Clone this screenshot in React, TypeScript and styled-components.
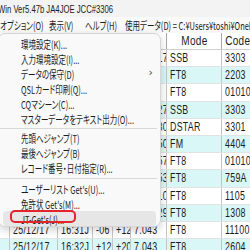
import React from 'react';
import styled, { createGlobalStyle } from 'styled-components';

const GlobalStyle = createGlobalStyle`
  html, body {
    margin: 0;
    padding: 0;
    background: #ffffff;
  }
  body {
    overflow: hidden;
  }
`;

const COLS = '10px 48px 35px 20px 18px 36px 55px 32px 1fr';

const Window = styled.div`
  position: relative;
  width: 250px;
  height: 250px;
  overflow: hidden;
  display: flex;
  flex-direction: column;
  background: #ffffff;
  color: #1b1b1b;
`;

// the capture is squeezed horizontally, so text is drawn condensed
const Squeeze = styled.span<{ $scale?: number; $origin?: string }>`
  display: inline-block;
  white-space: nowrap;
  line-height: 12px;
  transform: scaleX(${(p) => p.$scale ?? 0.68});
  transform-origin: ${(p) => p.$origin ?? 'left'} center;
`;

const TitleBar = styled.div`
  flex: none;
  height: 17px;
  display: flex;
  align-items: center;
  background: #f3f3f3;
  font: 11px 'Liberation Sans', 'Noto Sans CJK JP', sans-serif;
  margin-left: -2px;
`;

const MenuBar = styled.div`
  flex: none;
  height: 16px;
  display: flex;
  align-items: center;
  background: #f9f9f9;
  font: 11px 'Noto Sans CJK JP', sans-serif;
  font-feature-settings: 'palt';
`;

const MenuBarItem = styled.div<{ $w?: number }>`
  flex: ${(p) => (p.$w ? `0 0 ${p.$w}px` : '1 1 auto')};
  overflow: hidden;
  white-space: nowrap;
`;

const Table = styled.div`
  flex: 1;
  display: flex;
  flex-direction: column;
  font: 13px 'Liberation Sans', sans-serif;
  letter-spacing: 0.4px;
`;

const HeaderRow = styled.div`
  flex: none;
  height: 17px;
  display: grid;
  grid-template-columns: ${COLS};
  border-bottom: 1px solid #d0d0d0;
  box-sizing: border-box;
  background: #ffffff;
  font: 12.5px 'Liberation Sans', sans-serif;
`;

const HeaderCell = styled.div`
  border-right: 1px solid #a8a8a8;
  display: flex;
  align-items: center;
  justify-content: center;
  overflow: hidden;
`;

const Row = styled.div<{ $alt: boolean }>`
  flex: none;
  height: 17.2px;
  display: grid;
  grid-template-columns: ${COLS};
  background: ${(p) => (p.$alt ? '#d9f7f7' : '#ffffff')};
  border-bottom: 1px solid #e2e2e2;
  box-sizing: border-box;
`;

const Cell = styled.div`
  border-right: 1px solid #c4c4c4;
  display: flex;
  align-items: center;
  padding-left: 3px;
  overflow: hidden;
`;

const Popup = styled.div`
  position: absolute;
  left: -2px;
  top: 33px;
  width: 163px;
  box-sizing: border-box;
  padding: 2px 0 0;
  background: #f9f9f9;
  border: 1px solid #d6d6d6;
  border-radius: 7px;
  box-shadow: 0 3px 8px rgba(0, 0, 0, 0.18);
  font: 11px 'Noto Sans CJK JP', sans-serif;
  font-feature-settings: 'palt';
  color: #1b1b1b;
`;

const Item = styled.div<{ $hot?: boolean }>`
  position: relative;
  height: 15px;
  margin: 0 4px;
  padding-left: 18px;
  display: flex;
  align-items: center;
  border-radius: 4px;
  background: ${(p) => (p.$hot ? '#e6e6e6' : 'transparent')};
`;

const Arrow = styled.span`
  position: absolute;
  right: 3px;
  top: 0;
  font: 11px 'DejaVu Sans', sans-serif;
  line-height: 14px;
  color: #444;
`;

const Separator = styled.div<{ $gap: number }>`
  height: 1px;
  margin: ${(p) => p.$gap}px 3px ${(p) => p.$gap}px 1px;
  background: #d8d8d8;
`;

const Annotation = styled.div`
  position: absolute;
  left: 7px;
  top: -1px;
  width: 66px;
  height: 13px;
  border: 2px solid #e2252d;
  border-radius: 5px;
  box-sizing: border-box;
  pointer-events: none;
`;

interface LogRow {
  date: string;
  time: string;
  his: string;
  my: string;
  freq: string;
  mode: string;
  code: string;
}

const rows: LogRow[] = [
  { date: '25/12/14', time: '09:12J', his: '59', my: '59', freq: '144.217', mode: 'SSB', code: '3303' },
  { date: '25/12/14', time: '10:40J', his: '-10', my: '-14', freq: '7.074', mode: 'FT8', code: '2203' },
  { date: '25/12/15', time: '11:02J', his: '-08', my: '-12', freq: '7.074', mode: 'FT8', code: '01010' },
  { date: '25/12/15', time: '13:21J', his: '59', my: '59', freq: '144.227', mode: 'SSB', code: '3303' },
  { date: '25/12/15', time: '14:05J', his: '59', my: '59', freq: '434.330', mode: 'DSTAR', code: '3301' },
  { date: '25/12/16', time: '08:44J', his: '59', my: '59', freq: '145.550', mode: 'FM', code: '4404' },
  { date: '25/12/16', time: '12:18J', his: '-02', my: '-09', freq: '1.84057', mode: 'FT8', code: '01010' },
  { date: '25/12/16', time: '18:30J', his: '-11', my: '-05', freq: '18.1053', mode: 'FT8', code: '759A' },
  { date: '25/12/17', time: '07:55J', his: '+03', my: '-07', freq: '21.0710', mode: 'FT8', code: '1105' },
  { date: '25/12/17', time: '16:20J', his: '-04', my: '+02', freq: '50.3129', mode: 'FT8', code: '1308' },
  { date: '25/12/17', time: '16:31J', his: '-06', my: '+12', freq: '7.043', mode: 'FT8', code: '11100' },
  { date: '25/12/17', time: '16:32J', his: '+12', my: '+20', freq: '7.043', mode: 'FT8', code: '2604' },
];

const menuGroups: { label: string; sub?: boolean }[][] = [
  [
    { label: '環境設定(K)...' },
    { label: '入力環境設定(I)...' },
    { label: 'データの保守(D)', sub: true },
    { label: 'QSLカード印刷(Q)...' },
    { label: 'CQマシーン(C)...' },
    { label: 'マスターデータをテキスト出力(O)...' },
  ],
  [{ label: '先頭へジャンプ(T)' }, { label: '最後へジャンプ(B)' }, { label: 'レコード番号・日付指定(R)...' }],
  [{ label: 'ユーザーリスト Get\'s(U)...' }, { label: '免許状 Get\'s(M)...' }, { label: 'JT-Get\'s(J)...' }],
];

function OptionMenu(): JSX.Element {
  return (
    <Popup>
      {menuGroups.map((group, gi) => (
        <React.Fragment key={gi}>
          {gi > 0 && <Separator $gap={gi === 1 ? 1.5 : 2.5} />}
          {group.map((item) => {
            const hot = item.label.startsWith('JT-');
            return (
              <Item key={item.label} $hot={hot}>
                <Squeeze>{item.label}</Squeeze>
                {item.sub && <Arrow>›</Arrow>}
                {hot && <Annotation />}
              </Item>
            );
          })}
        </React.Fragment>
      ))}
    </Popup>
  );
}

export default function App(): JSX.Element {
  return (
    <>
      <GlobalStyle />
      <Window>
        <TitleBar>
          <Squeeze $scale={0.7}>Win Ver5.47b JA4JOE JCC#3306</Squeeze>
        </TitleBar>
        <MenuBar>
          <MenuBarItem $w={49}>
            <Squeeze>オプション(O)</Squeeze>
          </MenuBarItem>
          <MenuBarItem $w={36}>
            <Squeeze>表示(V)</Squeeze>
          </MenuBarItem>
          <MenuBarItem $w={40}>
            <Squeeze>ヘルプ(H)</Squeeze>
          </MenuBarItem>
          <MenuBarItem>
            <Squeeze>使用データ(D) = C:¥Users¥toshi¥OneDrive¥HAMLOG</Squeeze>
          </MenuBarItem>
        </MenuBar>
        <Table>
          <HeaderRow>
            <HeaderCell />
            <HeaderCell />
            <HeaderCell />
            <HeaderCell />
            <HeaderCell />
            <HeaderCell />
            <HeaderCell>
              <Squeeze $scale={0.8} $origin="center">Mode</Squeeze>
            </HeaderCell>
            <HeaderCell>
              <Squeeze $scale={0.8} $origin="center">Code</Squeeze>
            </HeaderCell>
            <HeaderCell />
          </HeaderRow>
          {rows.map((r, i) => (
            <Row key={i} $alt={i % 2 === 1}>
              <Cell />
              <Cell>
                <Squeeze>{r.date}</Squeeze>
              </Cell>
              <Cell>
                <Squeeze>{r.time}</Squeeze>
              </Cell>
              <Cell>
                <Squeeze>{r.his}</Squeeze>
              </Cell>
              <Cell>
                <Squeeze>{r.my}</Squeeze>
              </Cell>
              <Cell>
                <Squeeze>{r.freq}</Squeeze>
              </Cell>
              <Cell>
                <Squeeze>{r.mode}</Squeeze>
              </Cell>
              <Cell>
                <Squeeze>{r.code}</Squeeze>
              </Cell>
              <Cell />
            </Row>
          ))}
        </Table>
        <OptionMenu />
      </Window>
    </>
  );
}
